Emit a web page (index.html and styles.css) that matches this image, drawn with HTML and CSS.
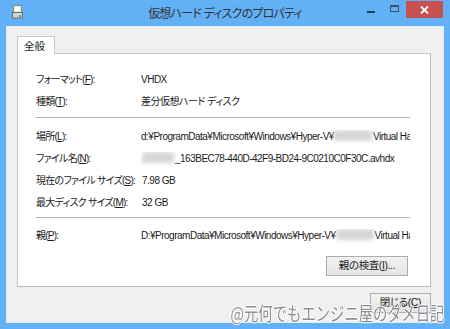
FILE: index.html
```html
<!DOCTYPE html>
<html lang="ja">
<head>
    <meta charset="UTF-8">
    <meta name="viewport" content="width=device-width, initial-scale=1.0">
    <title>仮想ハード ディスクのプロパティ</title>
    <link rel="stylesheet" href="styles.css">
</head>
<body>
    <div class="window">
        <div class="titlebar">
            <div class="title-icon">
                <svg width="11" height="14" viewBox="0 0 11 14">
                    <rect x="1.5" y="0.5" width="8" height="7" fill="#e6e6e6" stroke="#8c8c8c"/>
                    <rect x="3" y="2" width="5" height="4" fill="#ffffff"/>
                    <rect x="0.5" y="7.5" width="10" height="5.5" fill="#d2d2d2" stroke="#707070"/>
                    <rect x="7" y="10" width="2" height="2" fill="#2fb44c"/>
                </svg>
            </div>
            <div class="title-text">仮想ハード ディスクのプロパティ</div>
            <div class="caption-buttons">
                <span class="cap-min"></span>
                <span class="cap-max"></span>
                <span class="cap-close">
                    <svg width="9" height="8" viewBox="0 0 9 8">
                        <path d="M1 0.5 L8 7.5 M8 0.5 L1 7.5" stroke="#ffffff" stroke-width="1.8"/>
                    </svg>
                </span>
            </div>
        </div>

        <div class="client">
            <div class="tabs">
                <div class="tab">全般</div>
            </div>
            <div class="panel">
                <div class="group">
                    <div class="label">フォーマット(<u>F</u>):</div>
                    <div class="value">VHDX</div>
                    <div class="label">種類(<u>T</u>):</div>
                    <div class="value">差分仮想ハード ディスク</div>
                </div>
                <div class="sep"></div>
                <div class="group">
                    <div class="label">場所(<u>L</u>):</div>
                    <div class="value">d:¥ProgramData¥Microsoft¥Windows¥Hyper-V¥<span class="blur blur-path"></span>Virtual Hard Disks</div>
                    <div class="label">ファイル名(<u>N</u>):</div>
                    <div class="value"><span class="blur blur-name"></span>_163BEC78-440D-42F9-BD24-9C0210C0F30C.avhdx</div>
                    <div class="label">現在のファイル サイズ(<u>S</u>):</div>
                    <div class="value value-size">7.98 GB</div>
                    <div class="label">最大ディスク サイズ(<u>M</u>):</div>
                    <div class="value value-size">32 GB</div>
                </div>
                <div class="sep sep-second"></div>
                <div class="group">
                    <div class="label">親(<u>P</u>):</div>
                    <div class="value">D:¥ProgramData¥Microsoft¥Windows¥Hyper-V¥<span class="blur blur-path"></span>Virtual Hard Disks</div>
                </div>
                <div class="panel-actions">
                    <button class="btn btn-inspect">親の検査(<u>I</u>)...</button>
                </div>
            </div>
            <div class="dialog-actions">
                <button class="btn btn-close">閉じる(<u>C</u>)</button>
            </div>
        </div>

        <div class="watermark">@元何でもエンジニ屋のダメ日記</div>
    </div>
</body>
</html>
```

FILE: styles.css
```css
body {
    margin: 0;
    font-family: "Liberation Sans", "Noto Sans CJK JP", sans-serif;
    font-size: 10px;
    letter-spacing: -0.5px;
    color: #1a1a1a;
    font-feature-settings: "palt";
}
.window {
    position: relative;
    width: 450px;
    height: 329px;
    background-color: #62b0f6;
    display: flex;
    flex-direction: column;
    overflow: hidden;
}
.titlebar {
    height: 26px;
    display: grid;
    grid-template-columns: 1fr auto 1fr;
    align-items: start;
}
.title-icon {
    padding: 5px 0 0 12px;
    height: 14px;
}
.title-icon svg {
    display: block;
}
.title-text {
    font-size: 12px;
    line-height: 16px;
    letter-spacing: -0.8px;
    padding-top: 6px;
    color: #333333;
}
.caption-buttons {
    display: flex;
    justify-content: flex-end;
    align-items: flex-start;
    padding-right: 7px;
}
.cap-min {
    width: 8px;
    height: 2px;
    margin-top: 11px;
    background-color: #2d3a46;
}
.cap-max {
    width: 9px;
    height: 7px;
    box-sizing: border-box;
    margin: 5px 7px 0 15px;
    border: 1px solid #3d5266;
    border-top-width: 2px;
}
.cap-close {
    width: 37px;
    height: 17px;
    margin-top: 1px;
    background-color: #c75050;
    display: flex;
    align-items: center;
    justify-content: center;
}
.cap-close svg {
    display: block;
}
.client {
    flex: 1;
    margin: 0 6px 6px;
    border: 1px solid #dfeefc;
    background-color: #f0f0f0;
}
.tabs {
    display: flex;
    margin: 9px 0 0 10px;
}
.tab {
    position: relative;
    z-index: 1;
    width: 38px;
    height: 18px;
    box-sizing: border-box;
    margin-bottom: -1px;
    padding: 2px 0 0 6px;
    background-color: #ffffff;
    border: 1px solid #c9c9c9;
    border-bottom: none;
    font-size: 10.5px;
    line-height: 14px;
    letter-spacing: 0;
}
.panel {
    height: 234px;
    box-sizing: border-box;
    margin: 0 12px 0 10px;
    padding: 15px 20px 0 18px;
    background-color: #ffffff;
    border: 1px solid #c9c9c9;
    border-right-color: #b8b8b8;
    border-bottom-color: #b8b8b8;
}
.group {
    display: grid;
    grid-template-columns: 105px minmax(0, 1fr);
    grid-auto-rows: 22px;
    align-items: center;
}
.label, .value {
    white-space: nowrap;
    line-height: 14px;
}
.label {
    letter-spacing: -0.75px;
}
.value {
    overflow: hidden;
}
.value-size {
    padding-left: 1px;
}
.sep {
    height: 1px;
    margin: 4px 0 8px;
    background-color: #b4b4b4;
}
.sep-second {
    margin: 3px 0 7px;
}
.blur {
    display: inline-block;
    height: 11px;
    vertical-align: -1px;
    background-color: #d6d6d6;
    filter: blur(2px);
}
.blur-path {
    width: 38px;
    margin: 0 1px 0 0;
}
.blur-name {
    width: 32px;
    margin: 0 1px 0 1px;
}
.panel-actions {
    display: flex;
    justify-content: flex-end;
    margin: 9px 2px 0 0;
}
.btn {
    height: 20px;
    box-sizing: border-box;
    padding: 0 0 2px;
    font-family: inherit;
    font-size: 10.5px;
    line-height: 16px;
    letter-spacing: -0.4px;
    color: #1a1a1a;
    border: 1px solid #acacac;
    background: linear-gradient(#f2f2f2, #e4e4e4);
    font-feature-settings: "palt";
}
.btn-inspect {
    width: 82px;
}
.dialog-actions {
    display: flex;
    justify-content: flex-end;
    margin: 6px 12px 0 0;
}
.btn-close {
    width: 61px;
    padding-bottom: 4px;
}
.watermark {
    position: absolute;
    right: 6px;
    bottom: 5px;
    font-family: "Noto Sans CJK JP", sans-serif;
    font-size: 19px;
    line-height: 22px;
    letter-spacing: 0;
    color: #8a8f96;
    font-feature-settings: normal;
    transform: scaleX(0.755);
    transform-origin: right bottom;
    text-shadow: 1px 0 0 #fff, -1px 0 0 #fff, 0 1px 0 #fff, 0 -1px 0 #fff;
    white-space: nowrap;
}
```
